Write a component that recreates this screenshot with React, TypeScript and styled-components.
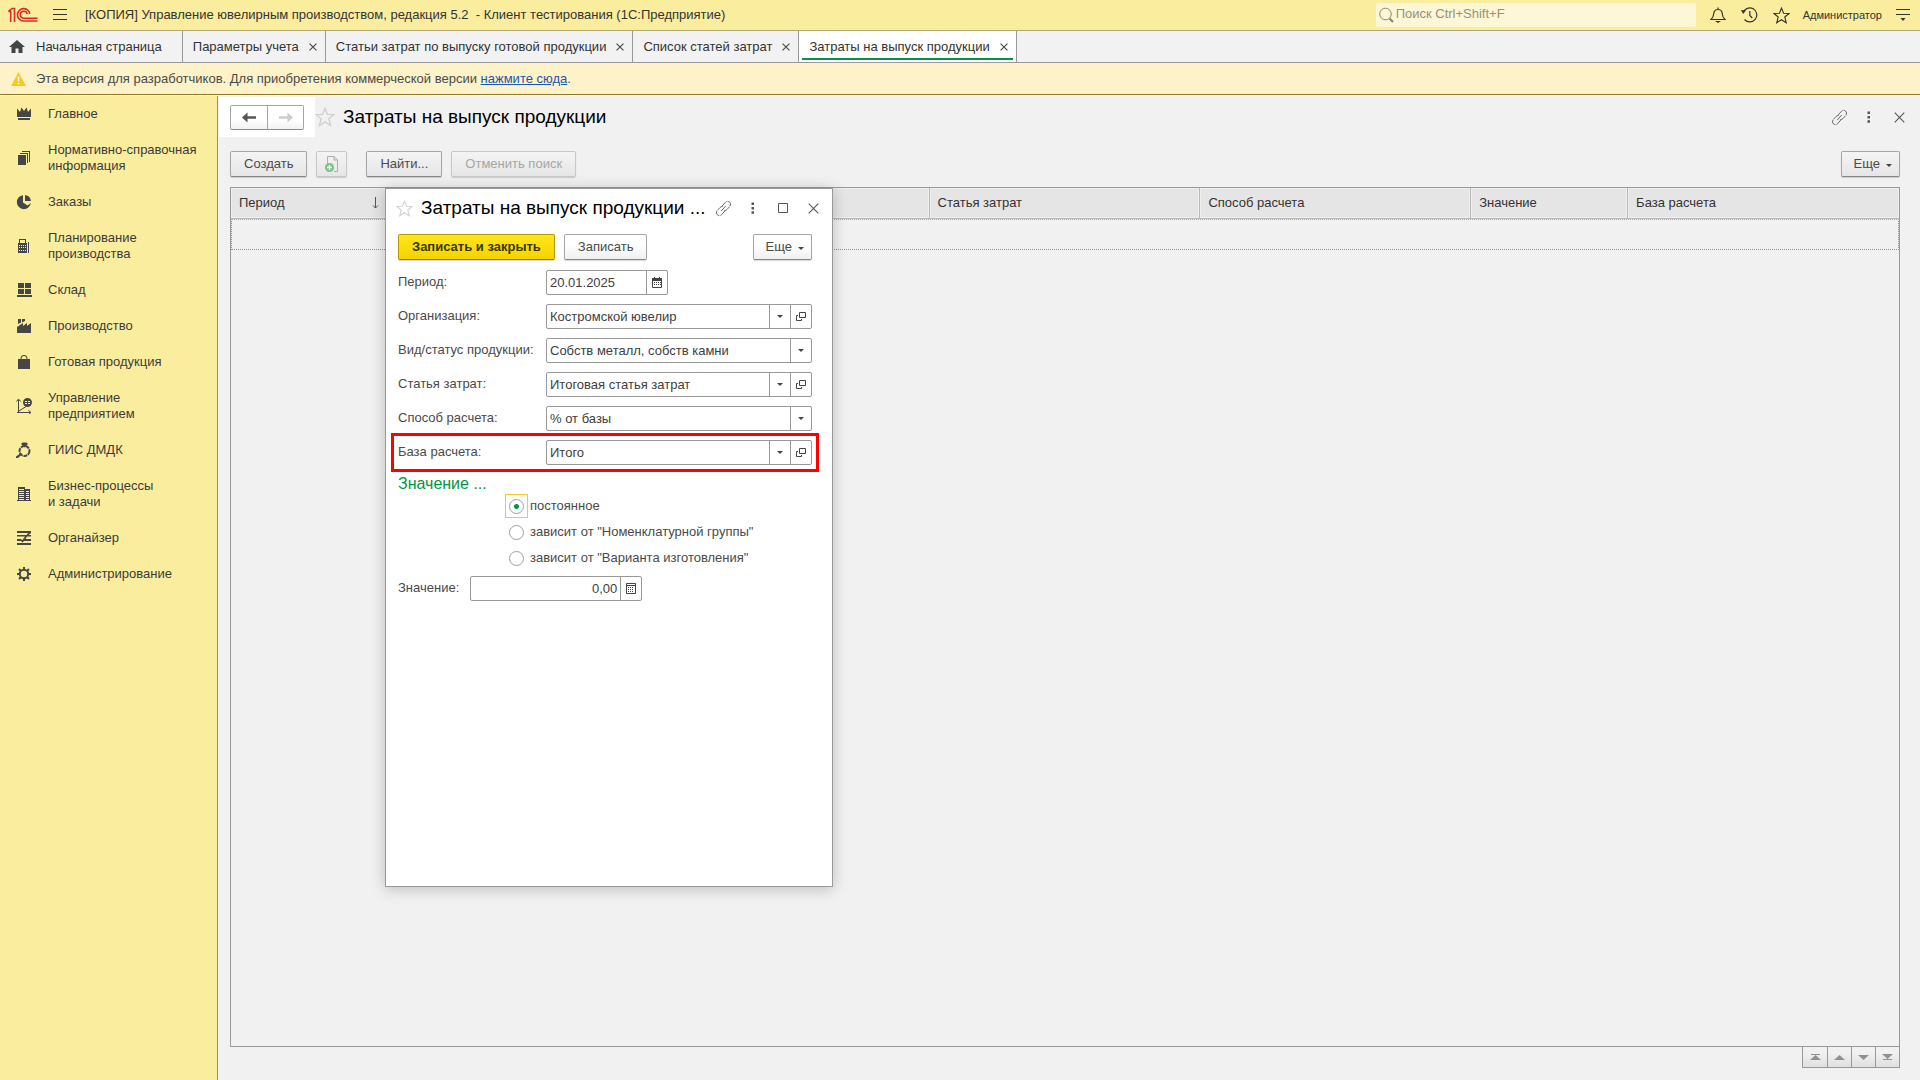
import React, { useState } from "react";
import styled, { createGlobalStyle, css } from "styled-components";

const ink = "#4a4a4a";
const line = "#999999";
const yellow = "#fbed9e";
const green = "#009646";

const GlobalStyle = createGlobalStyle`
  * { box-sizing: border-box; }
  body { margin: 0; background: #f1f1f1; }
  body, button, input, select {
    font-family: "Liberation Sans", Arial, sans-serif;
    font-size: 13px;
    line-height: 16px;
    color: ${ink};
  }
  svg { display: block; flex: none; }
`;

const Page = styled.div`
  display: flex;
  flex-direction: column;
  min-height: 100vh;
`;

const BareButton = styled.button`
  display: flex;
  align-items: center;
  justify-content: center;
  padding: 0;
  border: 0;
  background: none;
  cursor: pointer;
`;

const TitleBar = styled.header`
  display: flex;
  align-items: center;
  height: 31px;
  padding: 0 6px 0 8px;
  background: ${yellow};
  border-bottom: 1px solid #b1a873;
`;

const MenuButton = styled(BareButton)`
  width: 16px;
  height: 24px;
  margin: 0 17px 0 14px;
`;

const AppTitle = styled.div`
  flex: 1;
  color: #333333;
  white-space: pre;
`;

const SearchBox = styled.label`
  display: flex;
  align-items: center;
  width: 320px;
  height: 24px;
  padding: 0 3px;
  gap: 2px;
  background: #fdf7d6;
  border-radius: 2px;
`;

const SearchInput = styled.input`
  flex: 1;
  min-width: 0;
  padding: 0 0 2px;
  border: 0;
  outline: 0;
  background: none;
  &::placeholder { color: #95917e; opacity: 1; }
`;

const TopActions = styled.div`
  display: flex;
  align-items: center;
  gap: 10px;
  padding-left: 11px;
`;

const TopButton = styled(BareButton)`
  width: 22px;
  height: 24px;
`;

const UserButton = styled(BareButton)`
  font-size: 11px;
  color: #333333;
`;

const TabBar = styled.nav`
  display: flex;
  height: 32px;
  background: #f2f2f2;
  border-bottom: 1px solid ${line};
`;

const Tab = styled.div<{ $active?: boolean; $home?: boolean }>`
  position: relative;
  display: flex;
  align-items: center;
  gap: 8px;
  padding: ${(p) => (p.$home ? "0 20px 0 9px" : "0 6px 0 10px")};
  border-right: 1px solid ${line};
  background: ${(p) => (p.$active ? "#ffffff" : "transparent")};
  ${(p) =>
    p.$active &&
    css`
      &::after {
        content: "";
        position: absolute;
        left: 3px;
        right: 3px;
        bottom: 2px;
        height: 2px;
        background: ${green};
      }
    `}
`;

const TabLabel = styled(BareButton)`
  gap: 11px;
  color: #333333;
  white-space: nowrap;
`;

const TabClose = styled(BareButton)`
  width: 12px;
  height: 16px;
`;

const Notice = styled.div`
  display: flex;
  align-items: center;
  gap: 10px;
  height: 32px;
  padding: 0 11px;
  background: #fef2c8;
  border-bottom: 1px solid #8f7a1e;
`;

const NoticeLink = styled.a`
  color: #1a55b0;
`;

const Body = styled.div`
  display: flex;
  flex: 1;
  border-top: 1px solid #fdfbf0;
`;

const Sidebar = styled.nav`
  width: 218px;
  background: ${yellow};
  border-right: 1px solid #98916a;
`;

const SideItem = styled.a`
  display: flex;
  align-items: center;
  gap: 16px;
  padding: 10px 12px 10px 16px;
  color: #3b3b3b;
  text-decoration: none;
  white-space: pre-line;
`;

const Main = styled.main`
  position: relative;
  display: flex;
  flex-direction: column;
  flex: 1;
  min-width: 0;
  padding: 1px 20px 12px 12px;
`;

const FormHeader = styled.div`
  display: flex;
  align-items: center;
  height: 40px;
  margin: 0 -9px 0 -11px;
`;

const HistoryArea = styled.div`
  display: flex;
  align-items: center;
  align-self: stretch;
  padding: 0 11px;
  background: #ffffff;
`;

const HistoryButton = styled(BareButton)`
  width: 37px;
  height: 25px;
  border: 1px solid #a6a6a6;
  border-bottom-color: #8c8c8c;
  background: linear-gradient(#ffffff 60%, #f2f2f2);
  & + & { margin-left: -1px; }
  &:first-child { border-radius: 2px 0 0 2px; width: 38px; }
  &:last-child { border-radius: 0 2px 2px 0; }
`;

const Heading = styled.h1`
  flex: 1;
  min-width: 0;
  margin: 0 0 0 8px;
  overflow: hidden;
  color: #000000;
  font-size: 19px;
  font-weight: 400;
  line-height: 24px;
  white-space: nowrap;
`;

const WindowTools = styled.div`
  display: flex;
  align-items: center;
  gap: 10px;
`;

const ToolIcon = styled(BareButton)`
  width: 20px;
  height: 20px;
`;

const Toolbar = styled.div`
  display: flex;
  gap: 9px;
  padding: 14px 0 10px;
`;

const Spacer = styled.div`
  flex: 1;
`;

const Button = styled.button<{ $primary?: boolean; $flat?: boolean; $kind?: "icon" | "menu" }>`
  display: flex;
  align-items: center;
  justify-content: center;
  gap: 6px;
  height: 26px;
  padding: ${(p) => (p.$kind === "icon" ? "0 8px" : p.$kind === "menu" ? "0 7px 0 12px" : "0 13px")};
  border: 1px solid ${(p) => (p.$primary ? "#b39b00" : "#a6a6a6")};
  border-bottom-color: ${(p) => (p.$primary ? "#8f7c00" : "#858585")};
  border-radius: 2px;
  background: ${(p) =>
    p.$primary ? "linear-gradient(#ffe51a, #f5d400)" : p.$flat ? "linear-gradient(#f4f4f4, #e6e6e6)" : "linear-gradient(#ffffff 40%, #f0f0f0)"};
  box-shadow: 0 1px 1px rgba(0, 0, 0, 0.16);
  color: ${(p) => (p.$primary ? "#3a3600" : ink)};
  font-weight: ${(p) => (p.$primary ? 700 : 400)};
  white-space: nowrap;
  cursor: pointer;
  &:disabled {
    color: #a6a6a6;
    border-color: #c8c8c8;
    cursor: default;
  }
`;

const ButtonGap = styled.div`
  width: 1px;
`;

const ListBox = styled.div`
  flex: 1;
  border: 1px solid ${line};
`;

const ListTable = styled.table`
  width: 100%;
  border-collapse: separate;
  border-spacing: 0;
  table-layout: fixed;
`;

const ListHead = styled.th<{ $span: number }>`
  width: ${(p) => p.$span}%;
  height: 31px;
  padding: 0 8px;
  border-right: 1px solid #b8b8b8;
  border-bottom: 1px solid #b8b8b8;
  background: #e5e5e5;
  box-shadow: inset 0 0 0 1px #efefef;
  color: #333333;
  font-weight: 400;
  text-align: left;
  &:last-child { border-right: 0; }
`;

const SortLabel = styled.span`
  display: flex;
  align-items: center;
  justify-content: space-between;
`;

const EmptyCell = styled.td`
  height: 31px;
  padding: 0;
  border: 1px dotted #8f8f8f;
  border-top-color: #a6a6a6;
`;

const Pager = styled.div`
  display: flex;
  align-self: flex-end;
  border: 1px solid ${line};
  border-top: 0;
`;

const PagerButton = styled(BareButton)`
  width: 24px;
  height: 20px;
  background: linear-gradient(#f1f1f1 30%, #e0e0e0);
  & + & { border-left: 1px solid ${line}; }
`;

const Dialog = styled.section`
  position: absolute;
  left: 167px;
  top: 92px;
  width: 448px;
  min-height: 699px;
  padding: 0 20px 0 12px;
  background: #ffffff;
  border: 1px solid ${line};
  box-shadow: 0 2px 14px rgba(0, 0, 0, 0.22);
`;

const DialogHeader = styled.div`
  display: flex;
  align-items: center;
  height: 38px;
  margin: 0 -11px 7px -2px;
`;

const DialogTools = styled(WindowTools)`
  margin-left: 8px;
`;

const DialogToolbar = styled.div`
  display: flex;
  gap: 9px;
  margin-bottom: 10px;
`;

const Fields = styled.div`
  display: grid;
  gap: 9px;
`;

const FieldRow = styled.div<{ $marked?: boolean }>`
  position: relative;
  display: grid;
  grid-template-columns: 148px 1fr;
  align-items: center;
  ${(p) =>
    p.$marked &&
    css`
      &::after {
        content: "";
        position: absolute;
        inset: -7px;
        border: 3px solid #ff0000;
        pointer-events: none;
      }
    `}
`;

const FieldLabel = styled.label`
  padding-bottom: 2px;
  white-space: nowrap;
`;

const FieldBox = styled.div<{ $width?: number }>`
  display: flex;
  width: ${(p) => (p.$width ? `${p.$width}px` : "100%")};
  height: 25px;
  border: 1px solid ${line};
  border-radius: 2px;
  background: #ffffff;
`;

const fieldText = css`
  min-width: 0;
  padding: 0 3px;
  border: 0;
  outline: 0;
  background: none;
  color: #404040;
`;

const TextInput = styled.input<{ $right?: boolean }>`
  ${fieldText}
  flex: 1;
  text-align: ${(p) => (p.$right ? "right" : "left")};
`;

const SelectWrap = styled.div`
  display: grid;
  flex: 1;
  grid-template-columns: 1fr 21px;
`;

const Select = styled.select`
  ${fieldText}
  grid-area: 1 / 1 / 2 / 3;
  appearance: none;
`;

const SelectArrow = styled.span`
  grid-area: 1 / 2 / 2 / 3;
  display: flex;
  align-items: center;
  justify-content: center;
  border-left: 1px solid ${line};
  pointer-events: none;
`;

const FieldButton = styled(BareButton)`
  width: 21px;
  border-left: 1px solid ${line};
`;

const GroupTitle = styled.h2`
  margin: 9px 0 0;
  color: ${green};
  font-size: 16px;
  font-weight: 400;
  line-height: 20px;
`;

const RadioGroup = styled.div`
  display: grid;
  gap: 2px;
  padding-left: 107px;
`;

const RadioLabel = styled.label`
  display: flex;
  align-items: center;
  gap: 2px;
`;

const RadioFrame = styled.span<{ $on: boolean }>`
  display: flex;
  align-items: center;
  justify-content: center;
  width: 23px;
  height: 24px;
  border: 1px solid ${(p) => (p.$on ? "#f5c927" : "transparent")};
`;

const Radio = styled.input`
  appearance: none;
  width: 15px;
  height: 15px;
  margin: 0;
  border: 1px solid #a0a0a0;
  border-radius: 50%;
  background: #ffffff;
  outline: 0;
  &:checked { background: radial-gradient(circle, ${green} 2px, #ffffff 3px); }
`;

const ValueRow = styled.div`
  display: flex;
  align-items: center;
  gap: 11px;
  margin-top: 6px;
`;

const Cross = ({ size = 12, color = "#555" }: { size?: number; color?: string }) => (
  <svg width={size} height={size} viewBox="0 0 12 12" stroke={color} strokeWidth={13 / size} fill="none">
    <path d="M.8.8l10.4 10.4M11.2.8L.8 11.2" />
  </svg>
);

const Caret = () => (
  <svg width="6" height="3" viewBox="0 0 6 3" fill="#444"><path d="M0 0h6L3 3z" /></svg>
);

const MenuCaret = () => (
  <svg width="6" height="6" viewBox="0 0 6 6" fill="#444"><path d="M0 3h6L3 6z" /></svg>
);

const StarIcon = ({ size, color }: { size: number; color: string }) => (
  <svg width={size} height={size} viewBox="0 0 18 18" fill="none" stroke={color} strokeWidth="1.2">
    <path d="M9 1.200l2.200 5.400 5.700.3-4.400 3.700 1.500 6L9 13.400l-5 3.200 1.500-6L1.100 6.900l5.700-.3z" />
  </svg>
);

const LinkIcon = () => (
  <svg width="17" height="17" viewBox="0 0 17 17" fill="none" stroke="#6a6a6a" strokeLinecap="round">
    <path d="M7.200 6L10.400 2.300a3 3 0 0 1 4.400 4.100L12 9.500a2.900 2.900 0 0 1-2.300 1" strokeDasharray="6 1.600" />
    <path d="M9.800 11L6.600 14.700a3 3 0 0 1-4.400-4.100L5 7.500a2.900 2.900 0 0 1 2.300-1" strokeDasharray="6 1.600" />
    <path d="M6.500 10.700l4-4.400" />
  </svg>
);

const DotsIcon = () => (
  <svg width="4" height="12" viewBox="0 0 4 12" fill="#555">
    <path d="M.5.5h2.500v2.500H.5zM.5 4.900h2.500v2.500H.5zM.5 9.300h2.500v2.500H.5z" />
  </svg>
);

const SquareIcon = () => (
  <svg width="10" height="10" viewBox="0 0 10 10" fill="none" stroke="#555"><path d="M.5.5h9v9h-9z" /></svg>
);

const ArrowIcon = ({ flip, color }: { flip?: boolean; color: string }) => (
  <svg width="14" height="11" viewBox="0 0 14 11" fill={color}>
    <path d={flip ? "M14 5.500L8.500.5v3.700H0v2.600h8.500v3.700z" : "M0 5.500l5.500-5v3.700H14v2.600H5.500v3.700z"} />
  </svg>
);

const Logo = () => (
  <svg width="30" height="16" viewBox="0 0 30 16" fill="none" stroke="#de2a22" strokeWidth="1.600">
    <path d="M.3 4.500h2.400v10.500M.5 4.300L4 1.500h2.500v13.500" />
    <path d="M21.800 6.800A6.200 6.200 0 1 0 15.600 14H29.500" />
    <path d="M19.200 7A3.500 3.500 0 1 0 15.600 11.200H29.500" />
  </svg>
);

const OpenIcon = () => (
  <svg width="10" height="9" viewBox="0 0 10 9" fill="none" stroke="#444">
    <path d="M3.500.5h6v5h-6zM2 3.500H.5v5h5V7" />
  </svg>
);

const CalendarIcon = () => (
  <svg width="10" height="11" viewBox="0 0 10 11">
    <path d="M.5 1.500h9v9h-9z" fill="none" stroke="#444" />
    <path d="M0 1h10v3H0zM2 0h1v2H2zM7 0h1v2H7zM2 5h1v1H2zM4 5h1v1H4zM6 5h1v1H6zM2 7h1v1H2zM4 7h1v1H4zM6 7h1v1H6zM8 5h1v1H8zM8 7h1v1H8z" fill="#444" />
  </svg>
);

const CalcIcon = () => (
  <svg width="10" height="11" viewBox="0 0 10 11">
    <path d="M.5.5h9v10h-9zM.5 2.500h9" fill="none" stroke="#444" />
    <path d="M2 4h1v1H2zM4 4h1v1H4zM6 4h1v1H6zM2 6h1v1H2zM4 6h1v1H4zM6 6h1v1H6zM2 8h1v1H2zM4 8h1v1H4zM6 8h1v1H6z" fill="#444" />
  </svg>
);

const sideIcons: Record<string, React.ReactNode> = {
  crown: <path d="M1 2.500L4 6l1.500-4.500L8 5l2.500-3.500L12 6l3-3.500V11H1zM2 12h12v2H2z" />,
  books: <path d="M2 5h8v10H2zM4 3h8v10h-1V4H4zM6 1h8v11h-1V2H6z" />,
  pie: <path d="M7 1.200V8.500l4.500 3 3.300-2.500A7 7 0 1 1 7 1.200zM9 1a7 7 0 0 1 6 6H9z" />,
  calc: <path fillRule="evenodd" d="M3 1h7v4h1v10H2V5h1zM4 2v3h5V2zM3 7v1h1V7zm2 0v1h1V7zm2 0v1h1V7zm2 0v1h1V7zm-6 2v1h1V9zm2 0v1h1V9zm2 0v1h1V9zm2 0v1h1V9zm-6 3v1h1v-1zm2 0v1h1v-1zm2 0v1h1v-1zm2 0v1h1v-1zM12 4h1v11h-1z" />,
  store: <path d="M2 1h6v5H2zM9 1h6v5H9zM2 7h6v5H2zM9 7h6v5H9zM1 13h15v2H1z" />,
  factory: <path d="M2 1h3v3.500L2 6zM6 1h3v2L6 4.500zM1 9l6-4v3l4-3v3l4-3v10H1z" />,
  bag: <path fillRule="evenodd" d="M2 5h2.500a3.500 4 0 0 1 7 0H14v10H2zM5.500 5h5a2.500 3 0 0 0-5 0z" />,
  chart: (
    <>
      <path d="M2.500 2v12.500M.5 3.500l2-2.500 2 2.500M1 14.500h13M12.500 12.500l2.500 2-2.500 2M3 13l7-4.500" fill="none" stroke="#464646" />
      <path fillRule="evenodd" d="M11.500 0a4.500 4.500 0 1 1 0 9 4.500 4.500 0 0 1 0-9zM9 3h2v1H9zm3 0h2v1h-2zM9 5h2v1H9zm3 0h2v1h-2z" />
    </>
  ),
  ring: (
    <>
      <circle cx="8.500" cy="9" r="5" fill="none" stroke="#464646" strokeWidth="2" strokeDasharray="4 .8" />
      <path d="M8.500 5.500L5 2l1.500-1.500h4L12 2zM5 11l1.200 1.200L2 16H0v-1.500z" />
    </>
  ),
  building: <path fillRule="evenodd" d="M1 14h1V1h7v2h5v11h1v1H1zM3 3v1h5V3zm0 2v1h5V5zm0 2v1h5V7zm0 2v1h5V9zm0 2v1h5v-1zm0 2v1h5v-1zM10 5v1h3V5zm0 2v1h3V7zm0 2v1h3V9zm0 2v1h3v-1zm0 2v1h3v-1z" />,
  organizer: <path d="M1 1h14v2l-2.500 2H15v1.500h-4L9.500 9H15v2H8l-1.500 1.500L5 11H1V9h3.500l2 1L9 6.500H1V5h9.500L12 3H1zM1 13h14v2H1z" />,
  gear: (
    <>
      <circle cx="8" cy="8" r="4.200" fill="none" stroke="#464646" strokeWidth="2" />
      <path d="M7 1h2v3H7zM7 12h2v3H7zM1 7h3v2H1zM12 7h3v2h-3zM2.300 3.700l1.400-1.400 2 2-1.400 1.400zM10.300 11.700l1.400-1.400 2 2-1.400 1.400zM3.700 13.700l-1.400-1.400 2-2 1.400 1.400zM11.700 5.700l-1.400-1.400 2-2 1.400 1.400z" />
    </>
  ),
};

const sections: [string, string][] = [
  ["crown", "Главное"],
  ["books", "Нормативно-справочная\nинформация"],
  ["pie", "Заказы"],
  ["calc", "Планирование\nпроизводства"],
  ["store", "Склад"],
  ["factory", "Производство"],
  ["bag", "Готовая продукция"],
  ["chart", "Управление\nпредприятием"],
  ["ring", "ГИИС ДМДК"],
  ["building", "Бизнес-процессы\nи задачи"],
  ["organizer", "Органайзер"],
  ["gear", "Администрирование"],
];

const tabs = ["Параметры учета", "Статьи затрат по выпуску готовой продукции", "Список статей затрат", "Затраты на выпуск продукции"];

const columns: [string, number][] = [
  ["Период", 157],
  ["", 271],
  ["", 271],
  ["Статья затрат", 271],
  ["Способ расчета", 271],
  ["Значение", 157],
  ["База расчета", 271],
];
const columnTotal = columns.reduce((sum, c) => sum + c[1], 0);

type FieldDef = { id: string; label: string; value: string; open?: boolean; marked?: boolean };
const fields: FieldDef[] = [
  { id: "org", label: "Организация:", value: "Костромской ювелир", open: true },
  { id: "kind", label: "Вид/статус продукции:", value: "Собств металл, собств камни" },
  { id: "item", label: "Статья затрат:", value: "Итоговая статья затрат", open: true },
  { id: "method", label: "Способ расчета:", value: "% от базы" },
  { id: "base", label: "База расчета:", value: "Итого", open: true, marked: true },
];

const modes = ["постоянное", 'зависит от "Номенклатурной группы"', 'зависит от "Варианта изготовления"'];

const pagerPaths: [string, string][] = [
  ["В начало", "M1 0h9v1H1zM5.500 1L11 6H0z"],
  ["Назад", "M5.500 1L11 6H0z"],
  ["Вперед", "M0 1h11L5.500 6z"],
  ["В конец", "M0 0h11L5.500 5zM1 5h9v1H1z"],
];

function CostDialog() {
  const [mode, setMode] = useState(0);
  return (
    <Dialog role="dialog" aria-labelledby="dialog-title">
      <DialogHeader>
        <BareButton aria-label="В избранное"><StarIcon size={17} color="#d4d4d4" /></BareButton>
        <Heading as="h2" id="dialog-title">Затраты на выпуск продукции ...</Heading>
        <DialogTools>
          <ToolIcon aria-label="Ссылка"><LinkIcon /></ToolIcon>
          <ToolIcon aria-label="Действия"><DotsIcon /></ToolIcon>
          <ToolIcon aria-label="Развернуть"><SquareIcon /></ToolIcon>
          <ToolIcon aria-label="Закрыть"><Cross size={11} /></ToolIcon>
        </DialogTools>
      </DialogHeader>
      <DialogToolbar>
        <Button $primary>Записать и закрыть</Button>
        <Button>Записать</Button>
        <Spacer />
        <Button $kind="menu">Еще <MenuCaret /></Button>
      </DialogToolbar>
      <Fields>
        <FieldRow>
          <FieldLabel htmlFor="period">Период:</FieldLabel>
          <FieldBox $width={122}>
            <TextInput id="period" defaultValue="20.01.2025" />
            <FieldButton aria-label="Календарь"><CalendarIcon /></FieldButton>
          </FieldBox>
        </FieldRow>
        {fields.map((f) => (
          <FieldRow key={f.id} $marked={f.marked}>
            <FieldLabel htmlFor={f.id}>{f.label}</FieldLabel>
            <FieldBox>
              <SelectWrap>
                <Select id={f.id}><option>{f.value}</option></Select>
                <SelectArrow><Caret /></SelectArrow>
              </SelectWrap>
              {f.open && <FieldButton aria-label="Открыть"><OpenIcon /></FieldButton>}
            </FieldBox>
          </FieldRow>
        ))}
      </Fields>
      <GroupTitle>Значение ...</GroupTitle>
      <RadioGroup role="radiogroup">
        {modes.map((text, i) => (
          <RadioLabel key={text}>
            <RadioFrame $on={mode === i}>
              <Radio type="radio" name="mode" checked={mode === i} onChange={() => setMode(i)} />
            </RadioFrame>
            {text}
          </RadioLabel>
        ))}
      </RadioGroup>
      <ValueRow>
        <FieldLabel htmlFor="amount">Значение:</FieldLabel>
        <FieldBox $width={172}>
          <TextInput id="amount" $right defaultValue="0,00" />
          <FieldButton aria-label="Калькулятор"><CalcIcon /></FieldButton>
        </FieldBox>
      </ValueRow>
    </Dialog>
  );
}

export default function App() {
  return (
    <Page>
      <GlobalStyle />
      <TitleBar>
        <Logo />
        <MenuButton aria-label="Меню">
          <svg width="14" height="12" viewBox="0 0 14 12" stroke="#333"><path d="M0 .5h14M0 5.500h14M0 10.500h14" /></svg>
        </MenuButton>
        <AppTitle>{"[КОПИЯ] Управление ювелирным производством, редакция 5.2  - Клиент тестирования (1С:Предприятие)"}</AppTitle>
        <SearchBox>
          <svg width="15" height="16" viewBox="0 0 15 16" fill="none" stroke="#8b8872">
            <circle cx="6.500" cy="7" r="5.800" /><path d="M10.500 11.500l3.500 3.500" strokeWidth="2.200" />
          </svg>
          <SearchInput aria-label="Поиск" placeholder="Поиск Ctrl+Shift+F" />
        </SearchBox>
        <TopActions>
          <TopButton aria-label="Оповещения">
            <svg width="16" height="16" viewBox="0 0 16 16" fill="none" stroke="#333" strokeWidth="1.200">
              <path d="M1 12.500h14c-2-1.500-2.500-3-2.800-6C12 4 10.500 2.500 8 2.500S4 4 3.800 6.500C3.500 9.500 3 11 1 12.500zM8 .5v2" /><path d="M5 14h6l-3 2z" fill="#333" stroke="none" />
            </svg>
          </TopButton>
          <TopButton aria-label="История">
            <svg width="17" height="16" viewBox="0 0 17 16" fill="none" stroke="#333" strokeWidth="1.200">
              <path d="M2.200 5.500A7 7 0 1 1 3.500 12.500M8.800 4v4.500l2.500 2.500" /><path d="M0 3l5 .5L2 7z" fill="#333" stroke="none" />
            </svg>
          </TopButton>
          <TopButton aria-label="Избранное"><StarIcon size={17} color="#333" /></TopButton>
          <UserButton>Администратор</UserButton>
          <TopButton aria-label="Настройки">
            <svg width="14" height="12" viewBox="0 0 14 12" stroke="#333"><path d="M0 .5h14M0 5.500h14" /><path d="M4.500 9h5L7 12z" fill="#333" stroke="none" /></svg>
          </TopButton>
        </TopActions>
      </TitleBar>
      <TabBar>
        <Tab $home>
          <TabLabel>
            <svg width="16" height="13" viewBox="0 0 16 13" fill="#444"><path d="M8 0l8 7h-2.500v6H9.500V8.500h-3V13H2.500V7H0z" /></svg>
            Начальная страница
          </TabLabel>
        </Tab>
        {tabs.map((t, i) => (
          <Tab key={t} $active={i === tabs.length - 1}>
            <TabLabel>{t}</TabLabel>
            <TabClose aria-label="Закрыть"><Cross size={8} color="#444" /></TabClose>
          </Tab>
        ))}
      </TabBar>
      <Notice>
        <svg width="15" height="14" viewBox="0 0 15 14"><path d="M7.500 0L15 14H0z" fill="#fbc81e" /><path d="M6.700 4.500h1.600v5H6.700zM6.700 10.700h1.600v1.600H6.700z" fill="#fff" /></svg>
        <span>Эта версия для разработчиков. Для приобретения коммерческой версии <NoticeLink href="#buy">нажмите сюда</NoticeLink>.</span>
      </Notice>
      <Body>
        <Sidebar>
          {sections.map(([icon, name]) => (
            <SideItem key={name} href={`#${icon}`}>
              <svg width="16" height="16" viewBox="0 0 16 16" fill="#464646">{sideIcons[icon]}</svg>
              <span>{name}</span>
            </SideItem>
          ))}
        </Sidebar>
        <Main>
          <FormHeader>
            <HistoryArea>
              <HistoryButton aria-label="Назад"><ArrowIcon color="#555555" /></HistoryButton>
              <HistoryButton aria-label="Вперед"><ArrowIcon flip color="#cccccc" /></HistoryButton>
            </HistoryArea>
            <BareButton aria-label="В избранное"><StarIcon size={20} color="#cfcfcf" /></BareButton>
            <Heading>Затраты на выпуск продукции</Heading>
            <WindowTools>
              <ToolIcon aria-label="Ссылка"><LinkIcon /></ToolIcon>
              <ToolIcon aria-label="Действия"><DotsIcon /></ToolIcon>
              <ToolIcon aria-label="Закрыть"><Cross size={11} /></ToolIcon>
            </WindowTools>
          </FormHeader>
          <Toolbar>
            <Button $flat>Создать</Button>
            <Button $flat disabled $kind="icon" aria-label="Скопировать">
              <svg width="13" height="16" viewBox="0 0 13 16" fill="none">
                <path d="M2.500 8V.5H9L12.500 4v11.500H9M9 .5V4h3.500" stroke="#a9b1b8" /><circle cx="4.500" cy="11.500" r="4.500" fill="#7cc08b" />
                <path d="M4.500 9v5M2 11.500h5" stroke="#fff" strokeWidth="1.500" />
              </svg>
            </Button>
            <ButtonGap />
            <Button $flat>Найти...</Button>
            <Button $flat disabled>Отменить поиск</Button>
            <Spacer />
            <Button $flat $kind="menu">Еще <MenuCaret /></Button>
          </Toolbar>
          <ListBox>
            <ListTable>
              <thead>
                <tr>
                  {columns.map(([name, w], i) => (
                    <ListHead key={i} scope="col" $span={(w / columnTotal) * 100}>
                      {i === 0 ? (
                        <SortLabel>
                          {name}
                          <svg width="7" height="12" viewBox="0 0 7 12" fill="none" stroke="#555"><path d="M3.500 0v11M1 8.500L3.500 11 6 8.500" /></svg>
                        </SortLabel>
                      ) : name}
                    </ListHead>
                  ))}
                </tr>
              </thead>
              <tbody><tr><EmptyCell colSpan={columns.length} /></tr></tbody>
            </ListTable>
          </ListBox>
          <Pager>
            {pagerPaths.map(([name, d]) => (
              <PagerButton key={name} aria-label={name}>
                <svg width="11" height="6" viewBox="0 0 11 6" fill="#919191"><path d={d} /></svg>
              </PagerButton>
            ))}
          </Pager>
          <CostDialog />
        </Main>
      </Body>
    </Page>
  );
}
